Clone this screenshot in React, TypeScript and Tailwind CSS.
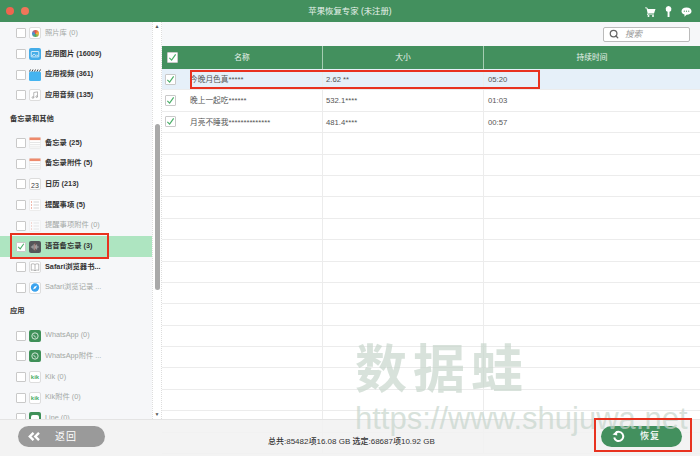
import React from 'react';
import { Search } from 'lucide-react';

const Check = ({ className = 'text-[#4caf6a]' }: { className?: string }) => (
  <svg viewBox="0 0 10 10" className={`w-[9px] h-[9px] ${className}`} fill="none" stroke="currentColor" strokeWidth="1.3">
    <path d="M1.5 5.5 L4 8 L8.5 1.5" />
  </svg>
);

const Box = ({ checked = false, large = false }: { checked?: boolean; large?: boolean }) => (
  <span className={`${large ? 'w-[11px] h-[11px]' : 'w-[10px] h-[10px]'} shrink-0 bg-white border border-[#c9c9c9] rounded-[1px] flex items-center justify-center`}>
    {checked && <Check />}
  </span>
);

const Tile = ({ children, className = 'bg-white border border-[#ddd]' }: { children?: React.ReactNode; className?: string }) => (
  <span className={`w-[12px] h-[12px] shrink-0 rounded-[2px] flex items-center justify-center overflow-hidden ${className}`}>{children}</span>
);

const NoteIcon = () => (
  <svg viewBox="0 0 12 12" className="w-[12px] h-[12px] shrink-0">
    <rect x="0.5" y="0.5" width="11" height="11" rx="1" fill="#fff" stroke="#ddd" strokeWidth="0.5" />
    <rect x="0.5" y="0.5" width="11" height="2.6" fill="#ee8a6c" />
    <path d="M1 5.5H11M1 7.7H11M1 9.9H11" stroke="#ccc" strokeWidth="0.5" />
  </svg>
);

const ListIcon = ({ faded = false }: { faded?: boolean }) => (
  <svg viewBox="0 0 12 12" className={`w-[12px] h-[12px] shrink-0 ${faded ? 'opacity-50' : ''}`}>
    <rect x="0.5" y="0.5" width="11" height="11" rx="1" fill="#fff" stroke="#ddd" strokeWidth="0.5" />
    <path d="M2 3H3M2 6H3M2 9H3" stroke="#e2725b" strokeWidth="1" />
    <path d="M4.5 3H10M4.5 6H10M4.5 9H10" stroke="#bbb" strokeWidth="0.6" />
  </svg>
);

const WhatsIcon = () => (
  <Tile className="bg-[#3f9058]">
    <svg viewBox="0 0 12 12" className="w-[10px] h-[10px]" fill="none" stroke="#fff" strokeWidth="0.9">
      <circle cx="6" cy="6" r="3.8" />
      <path d="M4.6 4.6 C4.6 6 6 7.4 7.4 7.4" />
    </svg>
  </Tile>
);

const KikIcon = () => (
  <Tile>
    <span className="text-[6px] leading-none font-bold text-[#4caf6a]">kik</span>
  </Tile>
);

type Item = { label: string; icon: React.ReactNode; active?: boolean; checked?: boolean };

const media: Item[] = [
  {
    label: '照片库 (0)',
    icon: (
      <Tile>
        <span className="w-[7px] h-[7px] rounded-full bg-[conic-gradient(#e2574c,#f1b53c,#56ad5f,#4a90d9,#e2574c)]" />
      </Tile>
    ),
  },
  {
    label: '应用图片 (16009)',
    active: true,
    icon: (
      <Tile className="bg-[#45ade8]">
        <svg viewBox="0 0 12 12" className="w-[10px] h-[10px]" fill="none" stroke="#fff" strokeWidth="0.9">
          <rect x="1.5" y="3" width="9" height="6.5" rx="0.5" />
          <path d="M2.5 8.5 L5 6 L7 8 L8 7 L9.5 8.5" />
        </svg>
      </Tile>
    ),
  },
  {
    label: '应用视频 (361)',
    active: true,
    icon: (
      <svg viewBox="0 0 12 12" className="w-[12px] h-[12px] shrink-0">
        <rect x="0" y="2.5" width="12" height="9.5" rx="1.5" fill="#45b4f0" />
        <path d="M0.5 2.5 L1.5 0.5 M3 2.5 L4 0.5 M5.5 2.5 L6.5 0.5 M8 2.5 L9 0.5 M10.5 2.5 L11.5 0.5" stroke="#333" strokeWidth="0.9" />
      </svg>
    ),
  },
  {
    label: '应用音频 (135)',
    active: true,
    icon: (
      <Tile>
        <svg viewBox="0 0 12 12" className="w-[10px] h-[10px]" fill="none" stroke="#888" strokeWidth="0.7">
          <path d="M4.5 9 V3 L9 2.2 V8" />
          <circle cx="3.5" cy="9" r="1" />
          <circle cx="8" cy="8" r="1" />
        </svg>
      </Tile>
    ),
  },
];

const memos: Item[] = [
  { label: '备忘录 (25)', active: true, icon: <NoteIcon /> },
  { label: '备忘录附件 (5)', active: true, icon: <NoteIcon /> },
  {
    label: '日历 (213)',
    active: true,
    icon: (
      <Tile>
        <span className="text-[7px] leading-none text-[#444] pt-[2px]">23</span>
      </Tile>
    ),
  },
  { label: '提醒事项 (5)', active: true, icon: <ListIcon /> },
  { label: '提醒事项附件 (0)', icon: <ListIcon faded /> },
  {
    label: '语音备忘录 (3)',
    active: true,
    checked: true,
    icon: (
      <Tile className="bg-[#55565a]">
        <svg viewBox="0 0 12 12" className="w-[10px] h-[10px]" fill="none" stroke="#e9e9e9" strokeWidth="0.7">
          <path d="M1 6H3M3.5 4V8M5 2.5V9.5M6.5 4V8M8 3V9M9.5 5V7" />
          <path d="M6 1V11" stroke="#e2725b" strokeWidth="0.5" />
        </svg>
      </Tile>
    ),
  },
  {
    label: 'Safari浏览器书...',
    active: true,
    icon: (
      <Tile>
        <svg viewBox="0 0 12 12" className="w-[10px] h-[10px]" fill="none" stroke="#888" strokeWidth="0.7">
          <path d="M6 3 C4.5 2 3 2 1.5 2.5 V10 C3 9.5 4.5 9.5 6 10.5 C7.5 9.5 9 9.5 10.5 10 V2.5 C9 2 7.5 2 6 3 V10.5" />
        </svg>
      </Tile>
    ),
  },
  {
    label: 'Safari浏览记录 ...',
    icon: (
      <Tile>
        <svg viewBox="0 0 12 12" className="w-[11px] h-[11px]">
          <circle cx="6" cy="6" r="5" fill="#3ba3ee" />
          <path d="M8.5 3.5 L6.8 6.8 L3.5 8.5 L5.2 5.2 Z" fill="#fff" />
        </svg>
      </Tile>
    ),
  },
];

const apps: Item[] = [
  { label: 'WhatsApp (0)', icon: <WhatsIcon /> },
  { label: 'WhatsApp附件 ...', icon: <WhatsIcon /> },
  { label: 'Kik (0)', icon: <KikIcon /> },
  { label: 'Kik附件 (0)', icon: <KikIcon /> },
  {
    label: 'Line (0)',
    icon: (
      <Tile className="bg-[#3f9058]">
        <span className="w-[8px] h-[6px] rounded-[2px] bg-white" />
      </Tile>
    ),
  },
];

const SideRow = ({ item }: { item: Item }) => (
  <div className={`h-[20.7px] shrink-0 flex items-center pl-[16px] gap-[3px] ${item.checked ? 'bg-[#aee5c1]' : ''}`}>
    <Box checked={item.checked} />
    {item.icon}
    <span className={`ml-[1px] text-[7.3px] whitespace-nowrap ${item.active ? 'text-[#333] font-bold' : 'text-[#a3a8a5]'}`}>{item.label}</span>
  </div>
);

const Section = ({ title }: { title: string }) => (
  <div className="h-[27px] shrink-0 flex items-center pl-[10px] text-[7.3px] font-bold text-[#333]">{title}</div>
);

const files = [
  { name: '今晚月色真*****', size: '2.62 **', time: '05:20', selected: true },
  { name: '晚上一起吃******', size: '532.1****', time: '01:03' },
  { name: '月亮不睡我**************', size: '481.4****', time: '00:57' },
];

const TableRow = ({ file }: { file?: (typeof files)[number] }) => (
  <div className={`h-[21.4px] shrink-0 flex items-center border-b border-[#ececec] text-[7.7px] text-[#555] ${file?.selected ? 'bg-[#e6f0f9]' : ''}`}>
    <div className="w-[28px] h-full flex items-center pl-[3px]">{file && <Box checked large />}</div>
    <div className="w-[133px] h-full flex items-center pt-[1px] border-r border-[#ececec]">{file?.name}</div>
    <div className="w-[161px] h-full flex items-center pt-[1px] pl-[3px] border-r border-[#ececec]">{file?.size}</div>
    <div className="flex-1 h-full flex items-center pt-[1px] pl-[4px]">{file?.time}</div>
  </div>
);

export default function App() {
  const empties = Array.from({ length: 15 });
  return (
    <div className="relative w-[700px] h-[456px] overflow-hidden flex flex-col bg-white font-['Liberation_Sans','Noto_Sans_CJK_SC',sans-serif]">
      {/* title bar */}
      <header className="relative h-[22px] shrink-0 bg-[#43905e] flex items-center justify-center text-[8.4px] text-white/90">
        苹果恢复专家 (未注册)
        <div className="absolute left-[6px] top-[7px] flex gap-[7px]">
          <span className="w-[8px] h-[8px] rounded-full bg-[#f0654f]" />
          <span className="w-[8px] h-[8px] rounded-full bg-[#f0765a]" />
        </div>
        <div className="absolute right-[8px] top-[6px] flex items-center gap-[9px]">
          <svg viewBox="0 0 11 10" className="w-[11px] h-[10px]" fill="#fff">
            <path d="M0 0.5 L2 0.5 L3 2 L10.5 2 L9 6.5 L3.5 6.5 L2.8 7.5 L9 7.5 L9 8 L2 8 L2.6 6.3 L1.5 1.3 L0 1.2 Z" />
            <circle cx="3.5" cy="9" r="1" />
            <circle cx="8" cy="9" r="1" />
          </svg>
          <svg viewBox="0 0 7 11" className="w-[7px] h-[11px]" fill="#fff">
            <path d="M3.5 0 A3 3 0 0 1 4.5 5.8 L4.5 11 L2.6 11 L2.6 5.8 A3 3 0 0 1 3.5 0 Z" />
          </svg>
          <svg viewBox="0 0 11 10" className="w-[11px] h-[10px]" fill="#fff">
            <path d="M5.5 0.5 C8.5 0.5 10.5 2 10.5 4.2 C10.5 6.4 8.5 7.8 5.5 7.8 L3.5 9.8 L3.5 7.5 C1.5 7 0.5 5.8 0.5 4.2 C0.5 2 2.5 0.5 5.5 0.5 Z" />
            <circle cx="3.3" cy="4.2" r="0.6" fill="#43905e" />
            <circle cx="5.5" cy="4.2" r="0.6" fill="#43905e" />
            <circle cx="7.7" cy="4.2" r="0.6" fill="#43905e" />
          </svg>
        </div>
      </header>

      <div className="flex-1 min-h-0 flex">
        {/* sidebar */}
        <aside className="w-[152px] shrink-0 bg-[#f6f7f9] overflow-hidden flex flex-col pt-[1px]">
          {media.map((i) => <SideRow key={i.label} item={i} />)}
          <Section title="备忘录和其他" />
          {memos.map((i) => <SideRow key={i.label} item={i} />)}
          <Section title="应用" />
          {apps.map((i) => <SideRow key={i.label} item={i} />)}
        </aside>

        {/* scrollbar */}
        <div className="w-[10px] shrink-0 bg-white border-x border-dotted border-[#ddd] flex flex-col items-center justify-between py-[2px]">
          <span className="text-[5px] leading-none text-[#555]">▲</span>
          <span className="w-[5px] h-[166px] mt-[76px] mb-[104px] rounded-full bg-[#a9a9a9]" />
          <span className="text-[5px] leading-none text-[#555]">▼</span>
        </div>

        {/* table area */}
        <main className="flex-1 min-w-0 flex flex-col bg-white">
          <div className="h-[24px] shrink-0 bg-[#f6f7f9] flex items-center justify-end pr-[10px]">
            <div className="w-[87px] h-[15px] bg-white border border-[#bbb] rounded-[2px] flex items-center pl-[5px] gap-[6px]">
              <Search size={10} strokeWidth={3} className="text-[#666]" />
              <span className="text-[8.5px] italic text-[#999]">搜索</span>
            </div>
          </div>
          <div className="relative h-[23px] shrink-0 bg-[#43905e] flex items-center text-[7.7px] text-white/90">
            <span className="absolute left-[5px] top-[6px]"><Box checked large /></span>
            <div className="w-[161px] h-full flex items-center justify-center border-r border-[#a5cdb2]">名称</div>
            <div className="w-[161px] h-full flex items-center justify-center border-r border-[#a5cdb2]">大小</div>
            <div className="flex-1 text-center">持续时间</div>
          </div>
          {files.map((f) => <TableRow key={f.name} file={f} />)}
          {empties.map((_, i) => <TableRow key={i} />)}
        </main>
      </div>

      {/* footer */}
      <footer className="relative z-10 h-[37px] shrink-0 bg-[#f2f2f2]/90 flex items-start pt-[6px] border-t border-[#e4e4e4]">
        <button className="ml-[18px] w-[87px] h-[21px] rounded-full bg-[#9a9a9a] text-white text-[10px] flex items-center pl-[10px] gap-[15px]">
          <svg viewBox="0 0 12 9" className="w-[12px] h-[9px]" fill="none" stroke="#fff" strokeWidth="2.4">
            <path d="M5.5 0.8 L1.8 4.5 L5.5 8.2 M11 0.8 L7.3 4.5 L11 8.2" />
          </svg>
          <span className="tracking-[1px]">返回</span>
        </button>
        <span className="ml-[163px] mt-[11px] text-[8px] leading-[10px] text-[#333] font-medium whitespace-nowrap">总共:85482项16.08 GB 选定:68687项10.92 GB</span>
        <button className="ml-auto mr-[18px] w-[81px] h-[21px] rounded-full bg-[#43905e] text-white text-[9px] font-medium flex items-center pl-[11px] gap-[15px]">
          <svg viewBox="0 0 13 13" className="w-[13px] h-[13px]" fill="none" stroke="#fff" strokeWidth="2">
            <path d="M3.6 3 A4.6 4.6 0 1 1 2.2 7.5" />
            <path d="M0.5 4.5 L5.2 0.8 L5.2 5.6 Z" fill="#fff" stroke="none" />
          </svg>
          <span className="tracking-[1px]">恢复</span>
        </button>
      </footer>

      {/* watermark */}
      <div className="absolute left-[355px] top-[338px] z-20 pointer-events-none text-[#c7d5cc]/70 flex flex-col">
        <span className="text-[52px] leading-[64px] font-bold tracking-[6px]">数据蛙</span>
        <span className="text-[31px] leading-[34px] whitespace-nowrap">https://www.shujuwa.net</span>
      </div>

      {/* annotation boxes */}
      <div className="absolute z-30 left-[10px] top-[233px] w-[99px] h-[26px] border-[2px] border-[#e8321f]" />
      <div className="absolute z-30 left-[190px] top-[70px] w-[350px] h-[19px] border-[2px] border-[#e8321f]" />
      <div className="absolute z-30 left-[594px] top-[418px] w-[98px] h-[34px] border-[2px] border-[#e8321f]" />
    </div>
  );
}
